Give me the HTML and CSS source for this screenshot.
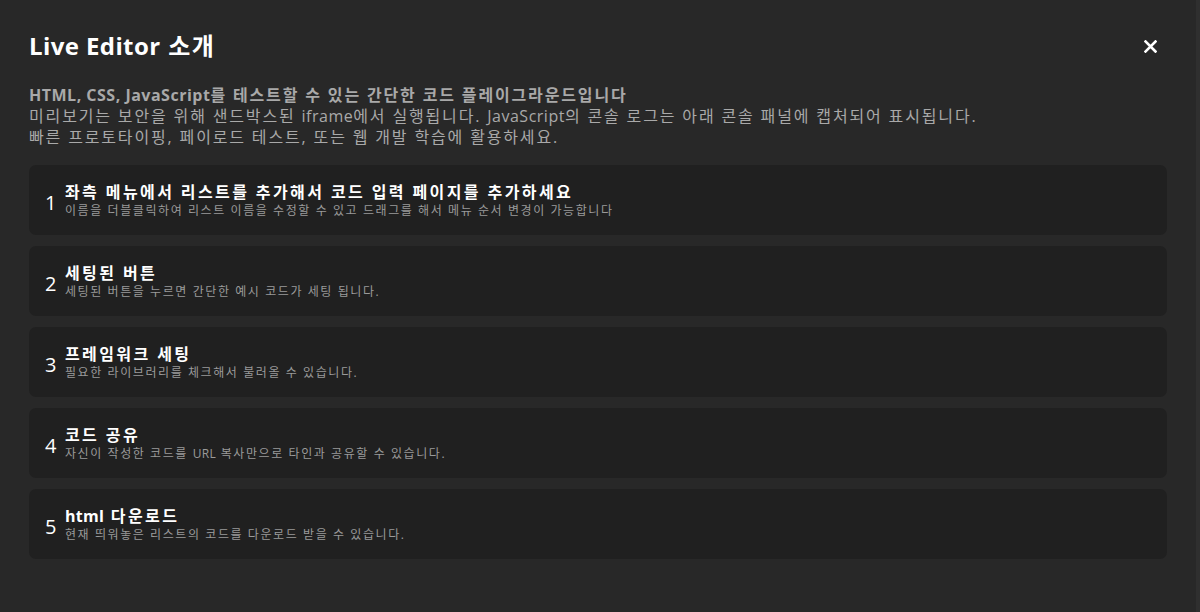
FILE: index.html
```html
<!DOCTYPE html>
<html lang="ko">
<head>
<meta charset="utf-8">
<title>Live Editor 소개</title>
<link rel="stylesheet" href="styles.css">
</head>
<body>
<div class="modal">
  <div class="modal-header">
    <h1 class="modal-title"><span class="latin">Live Editor</span> 소개</h1>
    <button class="close-btn" aria-label="닫기">
      <svg width="13" height="13" viewBox="0 0 13 13"><path d="M1.5 1.5 L11.5 11.5 M11.5 1.5 L1.5 11.5" stroke="#fff" stroke-width="2.6" stroke-linecap="square"/></svg>
    </button>
  </div>
  <div class="intro">
    <p class="intro-strong"><span class="latin">HTML, CSS, JavaScript</span>를 테스트할 수 있는 간단한 코드 플레이그라운드입니다</p>
    <p>미리보기는 보안을 위해 샌드박스된 <span class="latin">iframe</span>에서 실행됩니다. <span class="latin">JavaScript</span>의 콘솔 로그는 아래 콘솔 패널에 캡처되어 표시됩니다.</p>
    <p>빠른 프로토타이핑, 페이로드 테스트, 또는 웹 개발 학습에 활용하세요.</p>
  </div>
  <ol class="steps">
    <li class="step">
      <span class="step-num">1</span>
      <div class="step-body">
        <div class="step-title">좌측 메뉴에서 리스트를 추가해서 코드 입력 페이지를 추가하세요</div>
        <div class="step-desc">이름을 더블클릭하여 리스트 이름을 수정할 수 있고 드래그를 해서 메뉴 순서 변경이 가능합니다</div>
      </div>
    </li>
    <li class="step">
      <span class="step-num">2</span>
      <div class="step-body">
        <div class="step-title">세팅된 버튼</div>
        <div class="step-desc">세팅된 버튼을 누르면 간단한 예시 코드가 세팅 됩니다.</div>
      </div>
    </li>
    <li class="step">
      <span class="step-num">3</span>
      <div class="step-body">
        <div class="step-title">프레임워크 세팅</div>
        <div class="step-desc">필요한 라이브러리를 체크해서 불러올 수 있습니다.</div>
      </div>
    </li>
    <li class="step">
      <span class="step-num">4</span>
      <div class="step-body">
        <div class="step-title">코드 공유</div>
        <div class="step-desc">자신이 작성한 코드를 <span class="latin">URL</span> 복사만으로 타인과 공유할 수 있습니다.</div>
      </div>
    </li>
    <li class="step">
      <span class="step-num">5</span>
      <div class="step-body">
        <div class="step-title"><span class="latin">html</span> 다운로드</div>
        <div class="step-desc">현재 띄워놓은 리스트의 코드를 다운로드 받을 수 있습니다.</div>
      </div>
    </li>
  </ol>
</div>
</body>
</html>
```

FILE: styles.css
```css
* { box-sizing: border-box; }
html, body {
  margin: 0;
  padding: 0;
  height: 100%;
  background: #282828;
}
body {
  font-family: "Open Sans", "Noto Sans CJK KR", sans-serif;
  color: #fff;
  overflow: hidden;
}
.latin { letter-spacing: 0.5px; }
.modal {
  height: 612px;
  padding: 26px 29px 0 29px;
  background: #282828;
  border-right: 4px solid #2f2f2f;
}
.modal-header {
  display: flex;
  align-items: center;
  justify-content: space-between;
  height: 40px;
}
.modal-title {
  margin: 0;
  font-size: 24px;
  font-weight: 700;
  line-height: 40px;
  color: #fff;
  letter-spacing: 1.5px;
}
.modal-title .latin { letter-spacing: 0.4px; }
.close-btn {
  width: 20px;
  height: 20px;
  margin-right: 7px;
  padding: 0;
  border: 0;
  background: transparent;
  display: flex;
  align-items: center;
  justify-content: center;
  cursor: pointer;
}
.intro {
  margin-top: 19px;
  color: #a9a9a9;
  font-size: 16px;
  line-height: 21px;
  letter-spacing: 1.85px;
}
.intro p { margin: 0; }
.intro-strong { font-weight: 700; }
.steps {
  list-style: none;
  margin: 17px 0 0 0;
  padding: 0;
  display: flex;
  flex-direction: column;
  gap: 11px;
}
.step {
  height: 70px;
  background: #202020;
  border-radius: 7px;
  display: flex;
  align-items: center;
  padding-left: 16px;
  gap: 10px;
}
.step-num {
  font-size: 20px;
  width: 10px;
  text-align: center;
  margin-top: 4px;
  color: #fff;
}
.step-title {
  font-size: 16px;
  font-weight: 700;
  line-height: 20px;
  color: #fff;
  letter-spacing: 2.4px;
}
.step-desc {
  font-size: 12px;
  line-height: 17px;
  color: #9a9a9a;
  letter-spacing: 1.58px;
}
.step-title .latin, .step-desc .latin { letter-spacing: 0.3px; }
```
